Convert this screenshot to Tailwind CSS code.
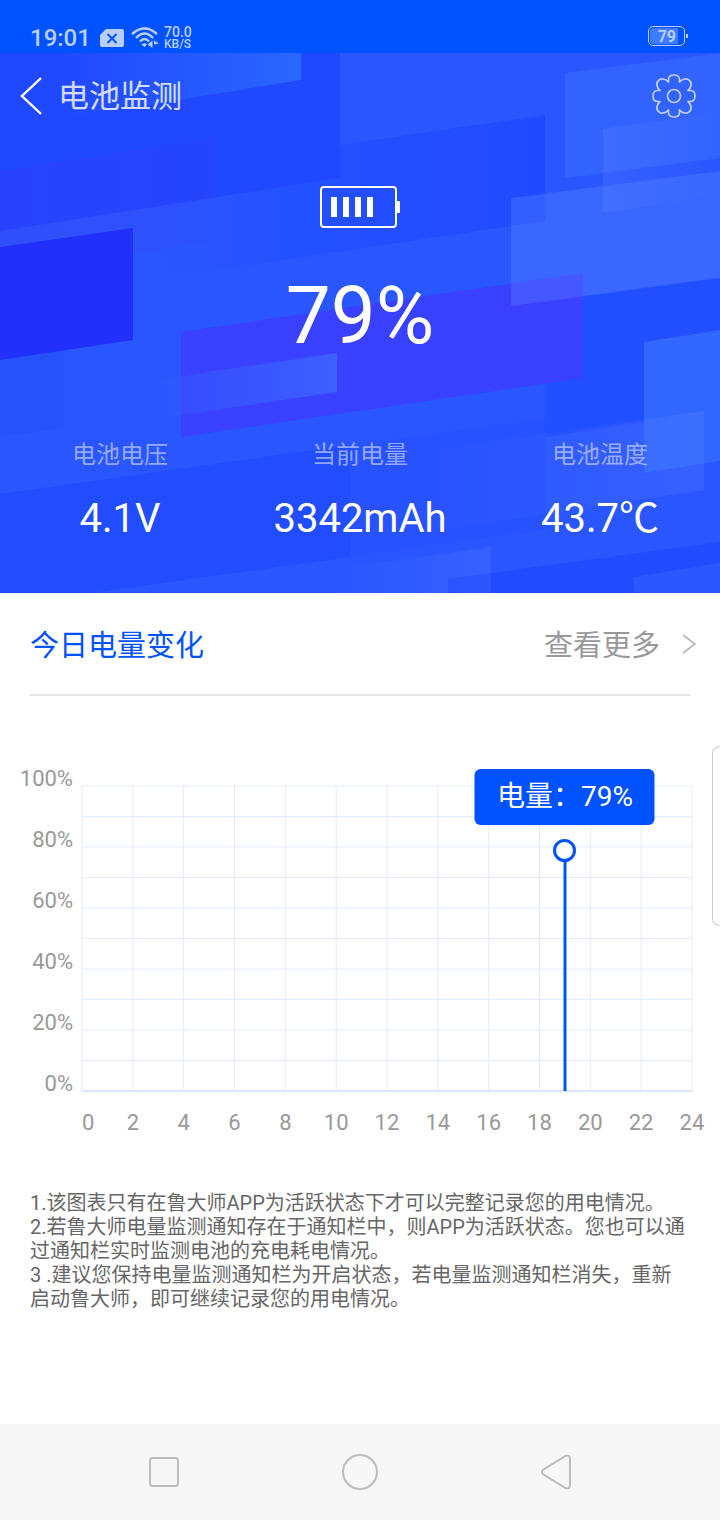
<!DOCTYPE html>
<html lang="zh-CN">
<head>
  <meta charset="UTF-8" />
  <meta name="viewport" content="width=device-width, initial-scale=1.0" />
  <title>电池监测</title>
  <script src="https://cdn.jsdelivr.net/npm/@tailwindcss/browser@4"></script>
</head>
<body class="bg-white font-[Roboto,'Noto_Sans_CJK_SC',sans-serif] min-h-screen flex flex-col relative">

  <!-- Status bar -->
  <div class="bg-[#0052ff] text-[#b8ceff] h-[53px] shrink-0 flex items-end justify-between pl-[30px] pr-8 pb-[3px]">
    <div class="flex items-center">
      <span class="text-2xl leading-6 font-medium w-[70px]">19:01</span>
      <svg class="w-6 h-[18px]" viewBox="0 0 24 18">
        <path d="M6 0H22a2 2 0 0 1 2 2V16a2 2 0 0 1-2 2H2a2 2 0 0 1-2-2V6Z" fill="#b8ceff" />
        <path d="M7.500 5l9 9M16.500 5l-9 9" stroke="#0052ff" stroke-width="2" />
      </svg>
      <svg class="w-7 h-6 ml-[7px]" viewBox="0 0 28 24" fill="none" stroke="#b8ceff" stroke-width="2.400">
        <path d="M1 8Q13.500-3 26 8" />
        <path d="M5 12Q13.500 3 22 12" />
        <path d="M9 15.500Q13.500 10.500 18 15.500" />
        <path d="M10.500 18.500Q13.500 16 16 18.500L13.500 21Z" fill="#b8ceff" stroke="none" />
        <path d="M21.500 14.500V22L16.500 18.500ZM23 14.500L28 17.500L23 18.500V22" fill="#b8ceff" stroke="none" />
      </svg>
      <div class="ml-[5px] font-medium">
        <div class="text-sm leading-3">70.0</div>
        <div class="text-xs leading-3">KB/S</div>
      </div>
    </div>
    <div class="flex items-center mb-1">
      <div class="w-[37px] h-5 border border-[#b8ceff] rounded-[5px] p-px">
        <div class="w-7 h-4 bg-[#3d7bff] rounded-l-sm text-base leading-[17px] font-bold text-right pr-[2px]">79</div>
      </div>
      <div class="w-[2px] h-1 bg-[#b8ceff] ml-px"></div>
    </div>
  </div>

  <!-- Battery overview -->
  <header class="relative h-[540px] shrink-0 text-white overflow-hidden">
    <svg class="absolute inset-0 w-full h-full" viewBox="0 53 720 540" preserveAspectRatio="none">
      <defs>
        <linearGradient id="topGlow"><stop offset="0" stop-color="#2a66ff" stop-opacity="0" /><stop offset="1" stop-color="#2a66ff" /></linearGradient>
        <linearGradient id="lightIn"><stop offset="0" stop-color="#fff" stop-opacity="0" /><stop offset="1" stop-color="#fff" stop-opacity=".06" /></linearGradient>
        <linearGradient id="lightOut"><stop offset="0" stop-color="#fff" stop-opacity=".06" /><stop offset="1" stop-color="#fff" stop-opacity="0" /></linearGradient>
        <linearGradient id="bar"><stop offset="0" stop-color="#2f5cff" stop-opacity="0" /><stop offset=".3" stop-color="#3556ff" stop-opacity=".7" /><stop offset="1" stop-color="#3d60ff" /></linearGradient>
        <linearGradient id="deep"><stop offset="0" stop-color="#2452ff" stop-opacity="0" /><stop offset=".4" stop-color="#214eff" stop-opacity=".8" /><stop offset="1" stop-color="#204aff" /></linearGradient>
        <linearGradient id="violet"><stop offset="0" stop-color="#4a30ec" stop-opacity=".2" /><stop offset="1" stop-color="#4a30ec" stop-opacity=".1" /></linearGradient>
      </defs>
      <rect y="53" width="720" height="540" fill="#2a56ff" />
      <path d="M0 53H340V178L0 231Z" fill="#2048ff" />
      <path d="M60 53H301V80L60 119Z" fill="url(#topGlow)" />
      <path d="M0 171L217 138V241L0 274Z" fill="url(#violet)" />
      <path d="M150 207L340 178V145L545 115V221L150 280Z" fill="url(#deep)" />
      <path d="M0 247L133 228V340L0 360Z" fill="#2230fb" />
      <path d="M0 360L64 350V427L0 437Z" fill="#2348ee" opacity=".35" />
      <path d="M545 301L720 277V410L545 437Z" fill="#214eff" />
      <path d="M0 494L350 445V557L90 593H0Z" fill="#224cff" />
      <path d="M350 445L545 418V530L350 557Z" fill="#2852ff" />
      <path d="M448 579L720 542V593H448Z" fill="#214bff" />
      <path d="M181 332L583 273V378L181 437Z" fill="#3a40ff" />
      <path d="M140 382L337 353V392L140 421Z" fill="url(#bar)" />
      <path d="M565 73L720 53V158L565 178Z" fill="#3263ff" />
      <path d="M603 129L720 112V194L603 213Z" fill="url(#lightOut)" />
      <path d="M511 198L720 171V278L511 306Z" fill="#689cff" opacity=".25" />
      <path d="M644 342L720 330V461L644 473Z" fill="#3166ff" />
      <path d="M420 452L704 411V490L420 533Z" fill="url(#lightIn)" />
      <path d="M330 570L491 547V593H330Z" fill="url(#lightIn)" />
      <path d="M634 577L720 563V593H634Z" fill="#2b57ff" />
    </svg>

    <div class="relative">
      <div class="flex items-center justify-between h-[86px] pl-5 pr-6">
        <button class="flex items-center gap-4" aria-label="返回">
          <svg class="w-[22px] h-10" viewBox="0 0 22 40" fill="none" stroke="#fff" stroke-width="2.400"><path d="M21 2L2 20L21 38" /></svg>
          <span class="text-[31px] leading-10 pt-[2px] text-white/80">电池监测</span>
        </button>
        <button aria-label="设置">
          <svg class="w-11 h-11" viewBox="-22 -22 44 44" fill="none" stroke="#c0cfff" stroke-width="1.700" stroke-linejoin="round">
            <circle r="6.500" />
            <path d="M-5.500-14V-16.500C-5.500-19.500-3-21-0-21S5.500-19.500 5.500-16.500V-14C8-17 13-18.500 15.500-15.500C18.500-13 17-8 14-5.500H16.500C19.500-5.500 21-3 21 0S19.500 5.500 16.500 5.500H14C17 8 18.500 13 15.500 15.500C13 18.500 8 17 5.500 14V16.500C5.500 19.500 3 21 0 21S-5.500 19.500-5.500 16.500V14C-8 17-13 18.500-15.500 15.500C-18.500 13-17 8-14 5.500H-16.500C-19.500 5.500-21 3-21 0S-19.500-5.500-16.500-5.500H-14C-17-8-18.500-13-15.500-15.500C-13-18.500-8-17-5.500-14Z" />
          </svg>
        </button>
      </div>

      <svg class="block w-20 h-[42px] mx-auto mt-[47px]" viewBox="0 0 80 42" fill="#fff">
        <rect x="1" y="1" width="75" height="40" rx="3" fill="none" stroke="#fff" stroke-width="2" />
        <path d="M77 15h2a1 1 0 0 1 1 1v10a1 1 0 0 1-1 1h-2ZM11 11h6v20h-6ZM23 11h6v20h-6ZM35 11h6v20h-6ZM47 11h6v20h-6Z" />
      </svg>
      <h1 class="text-center text-[80px] leading-[96px] mt-10">79%</h1>

      <dl class="grid grid-cols-3 text-center mt-[75px]">
        <div>
          <dt class="text-2xl leading-8 text-white/50">电池电压</dt>
          <dd class="text-[40px] leading-[48px] mt-6">4.1V</dd>
        </div>
        <div>
          <dt class="text-2xl leading-8 text-white/50">当前电量</dt>
          <dd class="text-[40px] leading-[48px] mt-6">3342mAh</dd>
        </div>
        <div>
          <dt class="text-2xl leading-8 text-white/50">电池温度</dt>
          <dd class="text-[40px] leading-[48px] mt-6">43.7℃</dd>
        </div>
      </dl>
    </div>
  </header>

  <main>
    <!-- Section title -->
    <div class="mx-[30px] h-[103px] pt-1 border-b-2 border-[#e4e4e4] flex items-center justify-between text-[29px] leading-10">
      <h2 class="text-[#0052ff]">今日电量变化</h2>
      <a href="#more" class="text-[#999] flex items-center gap-[22px] -mr-[6px]">查看更多
        <svg class="w-[14px] h-5 mb-1" viewBox="0 0 14 20" fill="none" stroke="#b8b8b8" stroke-width="1.600"><path d="M1 1L13 10L1 19" /></svg>
      </a>
    </div>

    <!-- Chart -->
    <section class="mt-[90px] pr-7 text-[22px] text-[#999]">
      <div class="flex">
        <div class="w-[73px] mr-[9px] -mt-[23px] -mb-[9px] flex flex-col justify-between text-right leading-8">
          <span>100%</span>
          <span>80%</span>
          <span>60%</span>
          <span>40%</span>
          <span>20%</span>
          <span>0%</span>
        </div>
        <div class="relative flex-1 h-[305px]">
          <svg class="block w-full h-full overflow-visible" viewBox="0 0 24 10" preserveAspectRatio="none" fill="none">
            <path d="M0 0H24M0 1H24M0 2H24M0 3H24M0 4H24M0 5H24M0 6H24M0 7H24M0 8H24M0 9H24M0 0V10M2 0V10M4 0V10M6 0V10M8 0V10M10 0V10M12 0V10M14 0V10M16 0V10M18 0V10M20 0V10M22 0V10M24 0V10" stroke="#e1ebff" vector-effect="non-scaling-stroke" />
            <path d="M0 10H24" stroke="#d9e4ff" stroke-width="2" vector-effect="non-scaling-stroke" />
          </svg>
          <!-- 19:00 reading -->
          <div class="absolute bottom-0 w-[3px] -translate-x-1/2 bg-[#0052ff]" style="left: 79.17%; height: 79%">
            <div class="absolute left-1/2 -top-[11px] -translate-x-1/2 w-[23px] h-[23px] rounded-full border-[3px] border-[#0052ff] bg-white"></div>
            <div class="absolute left-1/2 bottom-full mb-[25px] -translate-x-1/2 w-[180px] h-14 rounded-md bg-[#0052ff] text-white text-[28px] leading-[56px] text-center whitespace-nowrap">电量：79%</div>
          </div>
        </div>
      </div>
      <div class="flex justify-between ml-[82px] mt-4 leading-8">
        <span class="w-0 flex justify-start">0</span>
        <span class="w-0 flex justify-center">2</span>
        <span class="w-0 flex justify-center">4</span>
        <span class="w-0 flex justify-center">6</span>
        <span class="w-0 flex justify-center">8</span>
        <span class="w-0 flex justify-center">10</span>
        <span class="w-0 flex justify-center">12</span>
        <span class="w-0 flex justify-center">14</span>
        <span class="w-0 flex justify-center">16</span>
        <span class="w-0 flex justify-center">18</span>
        <span class="w-0 flex justify-center">20</span>
        <span class="w-0 flex justify-center">22</span>
        <span class="w-0 flex justify-center">24</span>
      </div>
    </section>

    <!-- Notes -->
    <div class="mt-[52px] mb-10 px-[30px] text-xl leading-6 text-[#666]">
      <p>1.该图表只有在鲁大师APP为活跃状态下才可以完整记录您的用电情况。</p>
      <p>2.若鲁大师电量监测通知存在于通知栏中，则APP为活跃状态。您也可以通过通知栏实时监测电池的充电耗电情况。</p>
      <p>3 .建议您保持电量监测通知栏为开启状态，若电量监测通知栏消失，重新启动鲁大师，即可继续记录您的用电情况。</p>
    </div>
  </main>

  <!-- Edge panel handle -->
  <div class="absolute right-0 top-[746px] w-2 h-[180px] border border-r-0 border-[#ccc] rounded-l-lg bg-white"></div>

  <!-- System navigation -->
  <nav class="mt-auto h-24 shrink-0 bg-[#f7f7f7] grid grid-cols-[1fr_64px_1fr] items-center px-[132px]">
    <button class="w-16 h-16 flex items-center justify-center" aria-label="最近任务">
      <svg class="w-[30px] h-[30px]" viewBox="0 0 30 30" fill="none" stroke="#bcbcbc" stroke-width="2"><rect x="1" y="1" width="28" height="28" rx="3" /></svg>
    </button>
    <button class="w-16 h-16 flex items-center justify-center" aria-label="主屏幕">
      <svg class="w-9 h-9" viewBox="0 0 36 36" fill="none" stroke="#bcbcbc" stroke-width="2"><circle cx="18" cy="18" r="17" /></svg>
    </button>
    <button class="w-16 h-16 flex items-center justify-center justify-self-end" aria-label="返回上一页">
      <svg class="w-[30px] h-9" viewBox="0 0 30 36" fill="none" stroke="#bcbcbc" stroke-width="2"><path d="M2.500 15.500L24.500 2Q29 0.500 29 5V31Q29 35.500 24.500 34L2.500 20.500Q-0.500 18 2.500 15.500Z" /></svg>
    </button>
  </nav>

</body>
</html>
